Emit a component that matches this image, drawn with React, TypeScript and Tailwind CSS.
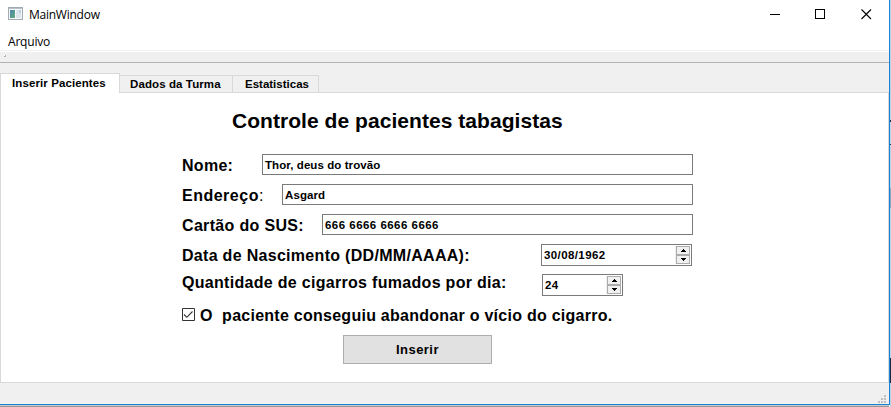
import type { ReactNode } from "react";

function Tab({ children, className }: { children: ReactNode; className: string }) {
  return (
    <div className={`box-border flex shrink-0 items-center whitespace-nowrap border-[#d9d9d9] text-[11.5px] leading-none ${className}`}>
      {children}
    </div>
  );
}

function Row({ label, className, labelClass, children }: { label: ReactNode; className: string; labelClass: string; children: ReactNode }) {
  return (
    <div className={`flex items-start ${className}`}>
      <span className={`shrink-0 whitespace-nowrap text-[16px] leading-[22px] ${labelClass}`}>{label}</span>
      {children}
    </div>
  );
}

function Field({ value, className }: { value: string; className: string }) {
  return (
    <div className={`h-[21px] shrink-0 whitespace-nowrap border border-[#7a7a7a] bg-white pl-[2px] text-[11.5px] leading-[20px] ${className}`}>
      {value}
    </div>
  );
}

function Arrow({ up }: { up?: boolean }) {
  return (
    <div className="flex h-[9px] w-[14px] items-center justify-center border border-[#acacac] bg-[#f0f0f0]">
      <svg width="5" height="3" viewBox="0 0 5 3" shapeRendering="crispEdges">
        <path d={up ? "M2 0h1v1h1v1h1v1H0V2h1V1h1z" : "M0 0h5v1H4v1H3v1H2V2H1V1H0z"} fill="#000" />
      </svg>
    </div>
  );
}

function Spin({ value, className }: { value: string; className: string }) {
  return (
    <div className={`flex h-[22px] shrink-0 justify-between border border-[#7a7a7a] bg-white pl-[2px] pr-px text-[11.5px] leading-[20px] tracking-[0.4px] ${className}`}>
      <span>{value}</span>
      <div className="mt-px flex h-[18px] flex-col bg-[#f0f0f0] pl-px">
        <Arrow up />
        <Arrow />
      </div>
    </div>
  );
}

export default function App() {
  return (
    <div className="flex h-[407px] w-[891px] overflow-hidden bg-[#f0f0f0] font-['Liberation_Sans',Arial,sans-serif] text-black">
      <div className="flex w-[889px] flex-col">
        <header className="flex h-[29px] items-center bg-white font-['Open_Sans','Noto_Sans',sans-serif]">
          <svg className="-mt-px ml-2 shrink-0" width="15" height="14" viewBox="0 0 15 14" shapeRendering="crispEdges">
            <defs>
              <linearGradient id="pane" x1="0" y1="0" x2="1" y2="1">
                <stop offset="0" stopColor="#4c84ac" />
                <stop offset="1" stopColor="#5fae7c" />
              </linearGradient>
            </defs>
            <path d="M0 0h15v13H0z" fill="#a3abb2" />
            <path d="M1 2h13v10H1z" fill="#f5f7f8" />
            <path d="M1 1h13v1H1z" fill="#b9c0c7" />
            <path d="M2 3h5v8H2z" fill="url(#pane)" />
            <path d="M8 3h5v8H8z" fill="#dce5ec" />
            <path d="M11 3h2v3h-2z" fill="#b8d2df" />
          </svg>
          <span className="ml-[6px] text-[12px] leading-[14px] tracking-[-0.25px]">MainWindow</span>
          <svg className="ml-auto mr-[17px]" width="102" height="11" viewBox="0 0 102 11" shapeRendering="crispEdges">
            <path d="M0 5h10v1H0z" />
            <path d="M45.5 .5h9v9h-9z" fill="none" stroke="#000" />
            <path d="M91.5 .5l9.5 9.5M101 .5l-9.5 9.5" fill="none" stroke="#000" strokeWidth="1.1" shapeRendering="auto" />
          </svg>
        </header>
        <nav className="h-[21px] bg-white pl-2 font-['Open_Sans','Noto_Sans',sans-serif] text-[12px] leading-[25px] tracking-[-0.2px]">Arquivo</nav>
        <div className="h-[2px] border-t border-[#f0f0f0] bg-white" />
        <div className="h-[11px] border-b border-[#b4b4b4] pl-[4px] pt-[3px]">
          <div className="h-[2px] w-[2px] border-b border-r border-[#b0b0b0] bg-white" />
        </div>

        <div className="mt-[10px] flex h-[20px] items-end font-bold">
          <Tab className="z-10 h-[20px] w-[120px] border-l border-r border-t bg-white pl-[11px]">
            <span className="tracking-[0.1px]">Inserir Pacientes</span>
          </Tab>
          <Tab className="h-[18px] w-[113px] border-b border-r border-t bg-[#f0f0f0] pl-[10px] pt-px">
            <span className="tracking-[0.1px]">Dados da Turma</span>
          </Tab>
          <Tab className="h-[18px] w-[86px] border-b border-r border-t bg-[#f0f0f0] pl-[12px] pt-px">
            <span className="tracking-[0px]">Estatisticas</span>
          </Tab>
          <div className="grow border-b border-[#d9d9d9]" />
        </div>

        <main className="h-[290px] border-b border-l border-r border-[#d9d9d9] bg-white pl-[181px] font-bold">
          <h1 className="ml-[50px] pt-[16px] text-[21px] leading-[24px] tracking-[0.05px] whitespace-nowrap">Controle de pacientes tabagistas</h1>
          <Row label="Nome:" className="mt-[21px] h-[30px]" labelClass="w-[80px] pt-px tracking-[0.28px]">
            <Field value="Thor, deus do trovão" className="w-[431px] tracking-[0.08px]" />
          </Row>
          <Row label={<>Endereço<span className="font-normal">:</span></>} className="h-[30px]" labelClass="w-[100px] pt-px tracking-[0.5px]">
            <Field value="Asgard" className="w-[411px] tracking-[0.1px]" />
          </Row>
          <Row label="Cartão do SUS:" className="h-[30px]" labelClass="w-[140px] pt-px tracking-[0.33px]">
            <Field value="666 6666 6666 6666" className="w-[371px] tracking-[0.47px]" />
          </Row>
          <Row label="Data de Nascimento (DD/MM/AAAA):" className="h-[30px]" labelClass="w-[359px] pt-px tracking-[0.3px]">
            <Spin value="30/08/1962" className="w-[151px]" />
          </Row>
          <Row label="Quantidade de cigarros fumados por dia:" className="h-[30px]" labelClass="-mt-[2px] w-[360px] tracking-[0.3px]">
            <Spin value="24" className="w-[81px]" />
          </Row>
          <label className="flex h-[31px] items-start pt-px">
            <svg className="mt-[3px] shrink-0" width="13" height="13" viewBox="0 0 13 13">
              <path d="M.5 .5h12v12H.5z" fill="#fff" stroke="#333" />
              <path d="M2 6.5l2.8 2.8 5.7-5.8" fill="none" stroke="#333" strokeWidth="1.1" />
            </svg>
            <span className="ml-[5px] whitespace-pre text-[16px] leading-[22px] tracking-[0.26px]">O  paciente conseguiu abandonar o vício do cigarro.</span>
          </label>
          <button className="ml-[161px] block h-[29px] w-[149px] border border-[#adadad] bg-[#e1e1e1] text-[13px] leading-[27px] tracking-[0.45px]">Inserir</button>
        </main>
        <footer className="flex h-[21px] items-end justify-end pb-px pr-[3px]">
          <svg width="8" height="8" viewBox="0 0 8 8" fill="#bfbfbf" shapeRendering="crispEdges">
            <path d="M6 0h2v2H6zM3 3h2v2H3zM6 3h2v2H6zM0 6h2v2H0zM3 6h2v2H3zM6 6h2v2H6z" />
          </svg>
        </footer>
        <div className="h-px bg-[#1883d7]" />
        <div className="h-px bg-[#c8c8c8]" />
        <div className="h-px bg-[#989898]" />
      </div>
      <div className="h-[405px] w-px bg-[#1883d7]" />
      <div className="flex w-px flex-col bg-[#b9d3e8]">
        <div className="mt-[120px] h-[2px] bg-[#202c40]" />
        <div className="mt-[22px] h-px bg-[#202c40]" />
        <div className="mt-[43px] h-[20px] bg-[#8ba9c4]" />
        <div className="mt-[150px] h-[25px] bg-[#17293f]" />
      </div>
    </div>
  );
}
